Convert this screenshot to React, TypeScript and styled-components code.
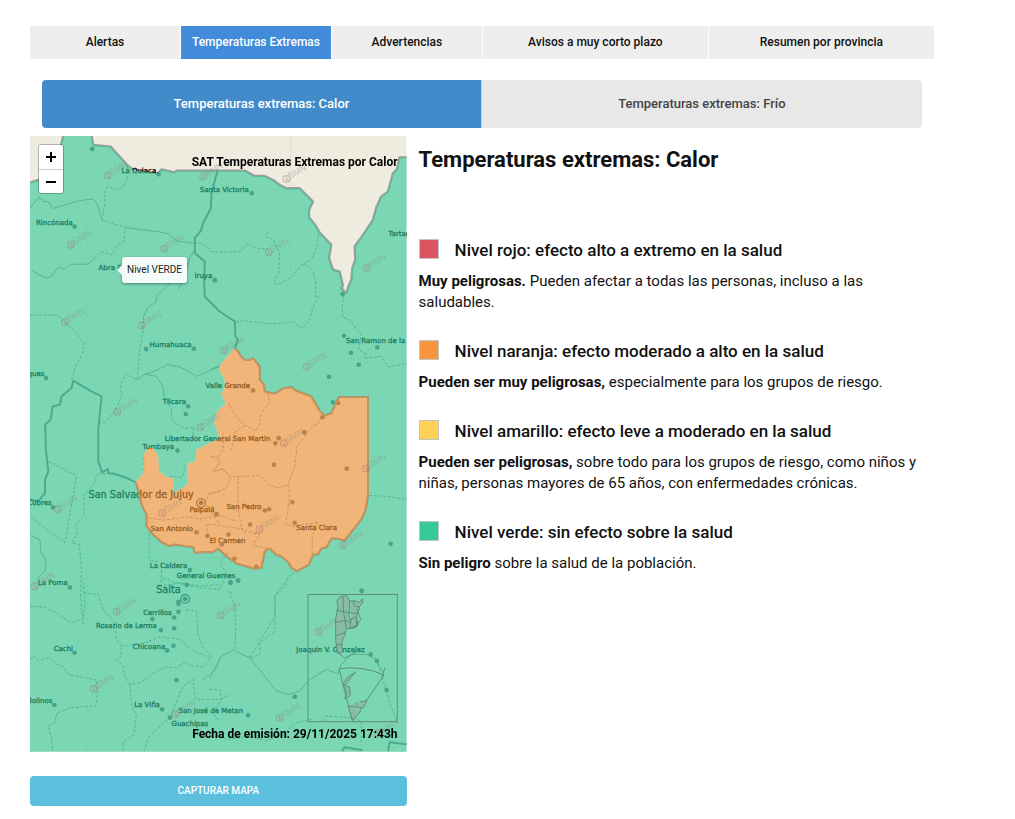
import React from 'react';
import styled, { createGlobalStyle } from 'styled-components';

const GlobalStyle = createGlobalStyle`
  * { box-sizing: border-box; }
  body {
    margin: 0;
    background: #fff;
    color: #111;
    font-family: Roboto, 'Liberation Sans', sans-serif;
    font-size: 15px;
    line-height: 21px;
  }
  button { font-family: inherit; cursor: pointer; }
`;

const Page = styled.main`
  padding: 26px 8% 13px 30px;
`;

const MainTabs = styled.nav`
  display: grid;
  grid-template-columns: 2fr 2fr 2fr 3fr 3fr;
  gap: 1px;
`;

const MainTab = styled.button<{ $active?: boolean }>`
  height: 33px;
  padding: 0 4px 2px;
  border: 0;
  background: ${p => (p.$active ? '#428bdb' : '#eee')};
  color: ${p => (p.$active ? '#fff' : '#111')};
  font-size: 12px;
  font-weight: 500;
`;

const SubTabs = styled.div`
  display: grid;
  grid-template-columns: 1fr 1fr;
  margin: 21px 12px 8px;
  border-radius: 4px;
  overflow: hidden;
`;

const SubTab = styled.button<{ $active?: boolean }>`
  height: 48px;
  padding: 0 4px 2px;
  border: 0;
  border-right: ${p => (p.$active ? '1px solid #ccc' : '0')};
  background: ${p => (p.$active ? '#428bca' : '#e8e8e8')};
  color: ${p => (p.$active ? '#fff' : '#444')};
  font-size: 13px;
  font-weight: 500;
`;

const Columns = styled.div`
  display: grid;
  grid-template-columns: 5fr 7fr;
  align-items: start;
`;

const MapFrame = styled.section`
  position: relative;
`;

const MapDrawing = styled.svg`
  display: block;
  width: 100%;
  height: auto;
`;

const MapCaption = styled.div<{ $place: 'top' | 'bottom' }>`
  position: absolute;
  right: 9px;
  ${p => (p.$place === 'top' ? 'top: 18px;' : 'bottom: 10px;')}
  color: #000;
  font-size: 12px;
  font-weight: 700;
  line-height: 16px;
`;

const ZoomBar = styled.div`
  position: absolute;
  top: 8px;
  left: 8px;
  display: flex;
  flex-direction: column;
  border: 1px solid rgba(0, 0, 0, 0.25);
  border-radius: 3px;
  overflow: hidden;
`;

const ZoomButton = styled.button`
  display: grid;
  place-items: center;
  width: 24px;
  height: 24px;
  padding: 0;
  border: 0;
  background: #fff;
  & + & { border-top: 1px solid #ccc; }
`;

const MapTooltip = styled.div`
  position: absolute;
  top: 121px;
  left: 92px;
  padding: 5px;
  border-radius: 3px;
  background: rgba(255, 255, 255, 0.92);
  box-shadow: 0 1px 3px rgba(0, 0, 0, 0.4);
  color: #222;
  font-size: 10px;
  line-height: 16px;
  &::before {
    content: '';
    position: absolute;
    top: 8px;
    left: -5px;
    border: 5px solid transparent;
    border-left: 0;
    border-right-color: rgba(255, 255, 255, 0.92);
  }
`;

const CaptureButton = styled.button`
  display: block;
  width: 100%;
  height: 30px;
  margin-top: 24px;
  border: 0;
  border-radius: 4px;
  background: #5bc0de;
  color: #fff;
  font-size: 10px;
  font-weight: 500;
`;

const Info = styled.section`
  padding: 10px 0 0 12px;
`;

const Title = styled.h1`
  margin: 0 0 65px;
  font-size: 22px;
  font-weight: 700;
  line-height: 28px;
`;

const Level = styled.article`
  margin-bottom: 27px;
`;

const LevelHead = styled.div`
  display: flex;
  align-items: flex-start;
  gap: 16px;
  margin-bottom: 9px;
`;

const Swatch = styled.span<{ $color: string }>`
  width: 20px;
  height: 20px;
  border: 1px solid #c4c4c4;
  background: ${p => p.$color};
`;

const LevelName = styled.h2`
  margin: 0;
  font-size: 17px;
  font-weight: 500;
  line-height: 23px;
`;

const LevelText = styled.p`
  margin: 0;
`;

type Pt = [number, number];
type Tile = {
  origin: Pt;
  labels?: [number, number, string, ('start' | 'end')?, number?][];
  dots?: Pt[];
  marks?: Pt[];
  trails?: string[];
  rivers?: string[];
};

const tiles: Tile[] = [
  {
    origin: [-30, -18],
    labels: [
      [305, 128, 'La Quiaca'], [540, 186, 'Santa Victoria'], [48, 285, 'Rincónada'],
      [236, 419, 'Abra Pampa'], [524, 446, 'Iruya'],
    ],
    dots: [[217, 57], [416, 133], [164, 290], [585, 451]],
    marks: [[263, 137], [153, 345], [433, 357], [550, 140]],
    trails: [
      'M322 110 322 150 308 172 285 178 262 170 254 188 255 222 246 270',
      'M246 270 275 280 315 292 312 335 290 348 275 375 242 364 232 378',
      'M523 340 540 340 560 350 575 365 600 366',
      'M600 366 640 366 660 365 685 341 705 354 745 357',
    ],
    rivers: [
      'M246 270 232 222 220 207 178 212 97 236 84 214 72 215 56 202 30 235',
      'M315 292 370 300 420 306 445 312 470 333 523 340',
      'M232 378 204 403 153 403 134 418 115 412 96 438 82 445 60 436 36 422',
      'M523 362 510 385 495 440 475 480',
    ],
  },
  {
    origin: [540, -18],
    labels: [[537, 319, 'Tartagal']],
    dots: [[126, 190], [15, 451]],
    marks: [[230, 147], [177, 368], [470, 415]],
    trails: [
      'M175 305 170 322 190 328 200 352 210 365 207 430 195 450 195 463 212 461 245 441 278 402 305 390 322 352 326 312',
      'M278 402 292 407 310 424 318 453 318 500 328 500 310 530 300 570 278 595 245 575 225 580 180 582 100 573 77 577',
    ],
  },
  {
    origin: [-30, 432],
    labels: [
      [389, 201, 'Humahuaca'], [429, 373, 'Tilcara'], [73, 290, 'Susques', 'end'],
      [435, 485, 'Libertador General San Martin'],
    ],
    dots: [[379, 208], [522, 207], [78, 295], [505, 380], [498, 403]],
    marks: [[135, 127], [365, 137], [292, 397], [542, 443]],
    trails: [
      'M30 106 112 106 128 120 165 155 192 187 188 220 165 265 155 300',
      'M432 350 455 390 455 420 480 440 495 446 522 442 518 480',
      'M371 110 370 150 360 210 355 260 352 300 320 283 307 302 300 325 307 345 285 395 255 428 240 430',
    ],
    rivers: [
      'M450 12 412 46 408 67 385 82 371 110',
      'M352 300 375 283 400 276 445 254 480 262 505 275 530 290 600 260',
      'M375 283 410 290 430 322 432 350',
    ],
  },
  {
    origin: [540, 432],
    labels: [[-13, 326, 'Valle Grande'], [409, 189, 'San Ramon de la Nueva Oran']],
    dots: [
      [399, 43], [403, 168], [503, 203], [424, 219], [447, 255], [358, 291], [130, 332],
      [370, 368], [385, 370], [338, 413], [284, 458], [207, 475],
    ],
    marks: [[42, 213], [291, 261]],
    trails: [
      'M403 45 397 80 400 112 422 122 440 148 455 165 447 210 470 222 462 236 515 230 535 260 560 258 591 250',
      'M175 340 178 370 155 400 150 430 140 453 105 437 80 410 55 370',
      'M338 413 325 432 310 438 290 462',
      'M105 437 75 458 65 510',
    ],
    rivers: ['M0 270 30 258'],
  },
  {
    origin: [-30, 882],
    labels: [
      [368, 58, 'Tumbaya'], [206, 205, 'San Salvador de Jujuy', 'start', 29],
      [95, 226, 'Cobres', 'end'], [509, 247, 'Palpalá'], [393, 303, 'San Antonio'], [569, 339, 'El Carmen'],
      [390, 416, 'La Caldera'], [471, 446, 'General Guemes'], [54, 468, 'La Poma'],
    ],
    dots: [[473, 63], [99, 233], [590, 254], [530, 308], [563, 319], [510, 422], [501, 466], [150, 474]],
    marks: [[113, 240], [427, 251], [45, 471]],
    trails: [
      'M85 95 170 138 135 340 85 303 30 260',
      'M285 130 230 133 225 160 192 195 192 260 168 285 172 310 155 340 178 345 185 420 182 500 190 590',
      'M387 265 430 272 500 262 545 268 600 258 650 275',
      'M388 310 388 390 425 400 425 445 440 480',
      'M598 80 610 60 610 10 M600 185 570 190 555 220 600 285 M563 319 560 283 600 288 680 300 720 315',
      'M430 445 470 460 540 475 600 480 620 430 600 400 625 370',
      'M450 140 487 143 497 105 M372 85 372 130',
    ],
    rivers: ['M30 318 60 330 62 365 78 392 75 425 50 450'],
  },
  {
    origin: [540, 882],
    labels: [[50, 238, 'San Pedro'], [260, 301, 'Santa Clara']],
    dots: [
      [207, 25], [197, 41], [284, 8], [193, 105], [411, 117], [248, 218], [165, 243], [178, 239],
      [20, 254], [121, 285], [255, 280], [56, 315], [36, 345], [74, 388], [140, 412], [543, 343],
      [62, 460], [85, 453], [456, 483],
    ],
    marks: [[222, 41], [469, 117], [149, 300], [400, 347]],
    trails: [
      'M290 15 262 50 255 110 235 165 205 175 175 165 150 138 60 142 50 175 0 195',
      'M85 142 85 240 98 305 150 315 128 348 180 357',
      'M235 165 240 200 228 285 250 292 280 285 325 278 308 318 307 375',
      'M478 198 530 200 591 210',
      'M255 428 232 445 228 470 195 500 197 560 150 635 120 685',
    ],
    rivers: ['M0 80 25 85 30 100 10 125 40 118 60 140'],
  },
  {
    origin: [-30, 1332],
    labels: [
      [409, 42, 'Salta', 'start', 29], [370, 108, 'Cerrillos'], [228, 146, 'Rosario de Lerma'],
      [101, 214, 'Cachi'], [339, 208, 'Chicoana'], [97, 371, 'Molinos', 'end'],
      [343, 384, 'La Viña'], [476, 402, 'San José de Metan'], [455, 440, 'Guachipas'],
    ],
    dots: [
      [476, 67], [476, 73], [476, 97], [463, 114], [398, 119], [463, 147], [423, 152], [164, 220],
      [461, 199], [442, 213], [470, 302], [427, 390], [450, 415], [103, 377],
    ],
    marks: [[290, 97], [221, 329], [467, 404]],
    trails: [
      'M190 40 235 45 250 90 280 125 292 185 305 198 302 235 290 240 310 260 315 290 330 315 365 308 410 275 440 263 470 265 495 250 520 260 550 262 578 230 550 205 535 165 530 95 495 90',
      'M30 240 42 230 55 243 90 235 110 255 130 262 145 285 230 302 235 330 228 380 150 385 110 402 105 430 85 440 95 480 98 516',
      'M305 200 370 192 420 172 480 180 515 210 575 238',
      'M330 315 335 380 350 405 342 465 310 490 310 516',
      'M372 516 385 475 410 450 450 415 490 320 520 300 527 360 600 360 630 345',
      'M30 80 70 82 110 100 150 130 190 120 195 60 190 10',
      'M420 0 425 20 480 10 540 20 600 15 M550 300 590 270 600 240',
    ],
  },
  {
    origin: [540, 1332],
    labels: [[260, 219, 'Joaquin V. Gonzalez']],
    dots: [[456, 34], [483, 225], [502, 245], [531, 332], [255, 352], [115, 408], [62, 8], [85, 3]],
    marks: [[33, 108], [327, 157], [210, 415], [505, 460]],
    trails: [
      'M232 0 195 50 195 155 150 190 150 225 120 235',
      'M60 35 75 80 78 150 75 210',
      'M345 427 350 410 430 415 455 425 455 500',
      'M0 470 60 480 120 470 170 485 220 465 260 430 310 420',
      'M500 240 520 300 540 370 563 427',
      'M0 330 30 330 35 360 10 400 30 430',
    ],
    rivers: ['M0 295 35 230 70 212 120 235 160 285 200 335 235 345 270 335 300 300 350 270 385 283 395 255 425 225 470 225 500 240 520 280'],
  },
];

const orangeEdge =
  'M615 637 625 647 632 660 645 672 660 673 670 667 690 692 690 732 702 745 705 767 735 774 760 758 785 754 800 765 845 782 870 825 885 840 905 832 928 784 1015 784 1015 1082 1008 1122 995 1152 975 1177 945 1215 920 1209 905 1209 890 1236 875 1239 865 1256 850 1257 838 1287 802 1307 785 1297 775 1280 755 1262 740 1258 720 1239 705 1247 700 1272 695 1297 675 1300 620 1284 590 1262 565 1239 550 1250 525 1250 495 1252 490 1234 465 1232 435 1227 420 1232 395 1220 370 1197 350 1172 350 1137 335 1107 328 1072 317 1040';
const orangeInner =
  ' 340 1012 342 957 355 937 368 937 385 962 387 1007 415 1027 430 1027 430 1072 450 1062 473 1047 473 984 497 977 500 942 530 927 568 907 565 892 553 862 562 827 588 804 575 775 585 757 585 732 570 707 572 687 600 654Z';
const greenOuter =
  'M0 140 30 130 92 30 100 0H185L190 27 242 32 290 85 310 102 385 112 395 100 435 109 440 104H645L675 120 705 120 730 132 750 147 770 157 810 157 828 175 850 197 838 222 838 244 860 272 870 290 905 327 898 367 910 402 930 407 940 450 935 457 950 472 960 442 965 432 968 397 977 372 975 332 1000 297 1030 252 1040 215 1055 182 1075 167 1090 112 1102 100 1110 64H1131V1848H0Z';
const frontier = greenOuter.replace('V1848H0Z', '').replace('H185L', 'M185 0 ');
const provinceBorders = [
  'M563 104 545 172 543 217 520 262 513 285 495 307 495 352 525 377 523 432 525 482 570 527 615 557 617 602 625 612 615 637',
  'M317 1040 290 1027 255 1015 235 1013 235 1000 217 1010 205 977 205 882 215 782 180 765 130 735 125 757 95 782 90 807 68 812 62 852 45 867 47 902 47 937 55 1007 45 1032 45 1072 25 1097 0 1092',
  'M938 1848 945 1836 1000 1845 M1075 1848 1080 1821 1131 1827',
];
const inset =
  'M930 1385 950 1380 960 1395 985 1400 990 1420 980 1440 985 1470 970 1478 950 1480 945 1500 935 1525 940 1548 925 1555 918 1515 918 1450 925 1415 922 1395Z M920 1425 950 1430 985 1435 M920 1460 948 1455 980 1470 M920 1500 950 1490 M940 1385 942 1430 950 1480 M960 1395 958 1440 970 1478 M920 1530 940 1525';

function ForecastMap() {
  return (
    <MapDrawing viewBox="0 0 1131 1849" role="img" aria-label="Mapa de niveles de temperaturas extremas por calor">
      <rect width="1131" height="1849" fill="#eeebdf" />
      <path d="M170 0V1849M783 0V1849M0 1267H1131" stroke="#e2e2da" strokeWidth="4" fill="none" />
      <path d={frontier} fill="none" stroke="#a39c9c" strokeWidth="7" strokeLinejoin="round" />
      {tiles.map((t, i) => (
        <g key={i} transform={`translate(${t.origin[0]} ${t.origin[1]})`} fill="none" strokeLinejoin="round">
          {t.trails?.map((d, k) => (
            <path key={k} d={d} stroke="#8b9189" strokeWidth="3" strokeDasharray="9 5" />
          ))}
          {t.rivers?.map((d, k) => (
            <path key={k} d={d} stroke="#91938c" strokeWidth="3" />
          ))}
        </g>
      ))}
      {[...provinceBorders, orangeEdge].map((d, k) => (
        <path key={k} d={d} fill="none" stroke="#777" strokeWidth="6" strokeLinejoin="round" />
      ))}
      {tiles.map((t, i) => (
        <g key={i} transform={`translate(${t.origin[0]} ${t.origin[1]})`}>
          {t.dots?.map(([x, y], k) => (
            <circle key={k} cx={x} cy={y} r="7" fill="#666" />
          ))}
          {t.labels?.map(([x, y, name, anchor, size]) => (
            <text
              key={name}
              x={x}
              y={y}
              textAnchor={anchor}
              fontSize={size ?? 21}
              fontFamily="DejaVu Sans, sans-serif"
              fill="#000"
              stroke="#000"
              strokeWidth="1"
            >
              {name}
            </text>
          ))}
        </g>
      ))}
      <g fill="none" stroke="#555" strokeWidth="4">
        <circle cx="514" cy="1102" r="13" />
        <circle cx="514" cy="1102" r="5" fill="#555" />
        <circle cx="466" cy="1390" r="13" />
        <circle cx="466" cy="1390" r="5" fill="#555" />
      </g>
      <path d={greenOuter.replace('V1848', 'V1849') + orangeEdge + orangeInner} fill="#34ca99" fillOpacity="0.62" fillRule="evenodd" />
      <path d={orangeEdge + orangeInner} fill="#f3943a" fillOpacity="0.62" />
      <path d={orangeEdge} fill="none" stroke="#c9925f" strokeWidth="5" strokeLinejoin="round" />
      <g fill="none" stroke="#5f8f7b" strokeWidth="3">
        <rect x="835" y="1377" width="268" height="382" />
        <path d={inset} fill="#88bda5" />
        <path d="M970 1395 990 1400 998 1390 1000 1400 988 1415 975 1412Z M965 1450 980 1445 980 1475 960 1480Z" fill="#88bda5" />
        <path d="M982 1420 993 1452 982 1470 960 1478" />
        <path d="M928 1600Q1000 1590 1063 1619L968 1757Z M1066 1596 1058 1625" />
        <path d="M978 1610 955 1625 940 1645 948 1648 962 1628Z M940 1650 960 1655 962 1680 945 1690 952 1672Z M955 1712 1000 1718 1012 1695 990 1700M975 1700 985 1710 M955 1712 970 1755 995 1725" fill="#88bda5" />
        <path d="M922 1548 945 1568 980 1550" />
      </g>
      {tiles.map((t, i) => (
        <g key={i} transform={`translate(${t.origin[0]} ${t.origin[1]})`} opacity="0.42" aria-hidden="true">
          {t.marks?.map(([x, y], k) => (
            <g key={k} transform={`translate(${x} ${y})`}>
              <circle r="10" fill="none" stroke="#a07877" strokeWidth="4" />
              <path d="M0-5V4H7" fill="none" stroke="#a07877" strokeWidth="4" />
              <text x="9" y="6" transform="rotate(-30)" fontSize="27" fontFamily="Liberation Sans, sans-serif" fill="#8b8b88">
                SMN
              </text>
            </g>
          ))}
        </g>
      ))}
    </MapDrawing>
  );
}

const mainTabs = ['Alertas', 'Temperaturas Extremas', 'Advertencias', 'Avisos a muy corto plazo', 'Resumen por provincia'];

const levels = [
  { color: '#db5461', name: 'Nivel rojo: efecto alto a extremo en la salud', lead: 'Muy peligrosas.', text: 'Pueden afectar a todas las personas, incluso a las saludables.' },
  { color: '#f7963e', name: 'Nivel naranja: efecto moderado a alto en la salud', lead: 'Pueden ser muy peligrosas,', text: 'especialmente para los grupos de riesgo.' },
  { color: '#ffd257', name: 'Nivel amarillo: efecto leve a moderado en la salud', lead: 'Pueden ser peligrosas,', text: 'sobre todo para los grupos de riesgo, como niños y niñas, personas mayores de 65 años, con enfermedades crónicas.' },
  { color: '#35c997', name: 'Nivel verde: sin efecto sobre la salud', lead: 'Sin peligro', text: 'sobre la salud de la población.' },
];

export default function App() {
  return (
    <>
      <GlobalStyle />
      <Page>
        <MainTabs>
          {mainTabs.map((name, i) => (
            <MainTab key={name} type="button" $active={i === 1}>{name}</MainTab>
          ))}
        </MainTabs>
        <SubTabs>
          <SubTab type="button" $active>Temperaturas extremas: Calor</SubTab>
          <SubTab type="button">Temperaturas extremas: Frío</SubTab>
        </SubTabs>
        <Columns>
          <div>
            <MapFrame>
              <ForecastMap />
              <ZoomBar>
                <ZoomButton type="button" aria-label="Acercar">
                  <svg width="12" height="12" viewBox="0 0 12 12"><path d="M6 1V11M1 6H11" stroke="#000" strokeWidth="2" /></svg>
                </ZoomButton>
                <ZoomButton type="button" aria-label="Alejar">
                  <svg width="12" height="12" viewBox="0 0 12 12"><path d="M1 6H11" stroke="#000" strokeWidth="2" /></svg>
                </ZoomButton>
              </ZoomBar>
              <MapCaption $place="top">SAT Temperaturas Extremas por Calor</MapCaption>
              <MapCaption $place="bottom">Fecha de emisión: 29/11/2025 17:43h</MapCaption>
              <MapTooltip role="tooltip">Nivel VERDE</MapTooltip>
            </MapFrame>
            <CaptureButton type="button">CAPTURAR MAPA</CaptureButton>
          </div>
          <Info>
            <Title>Temperaturas extremas: Calor</Title>
            {levels.map(l => (
              <Level key={l.name}>
                <LevelHead>
                  <Swatch $color={l.color} />
                  <LevelName>{l.name}</LevelName>
                </LevelHead>
                <LevelText><strong>{l.lead}</strong> {l.text}</LevelText>
              </Level>
            ))}
          </Info>
        </Columns>
      </Page>
    </>
  );
}
